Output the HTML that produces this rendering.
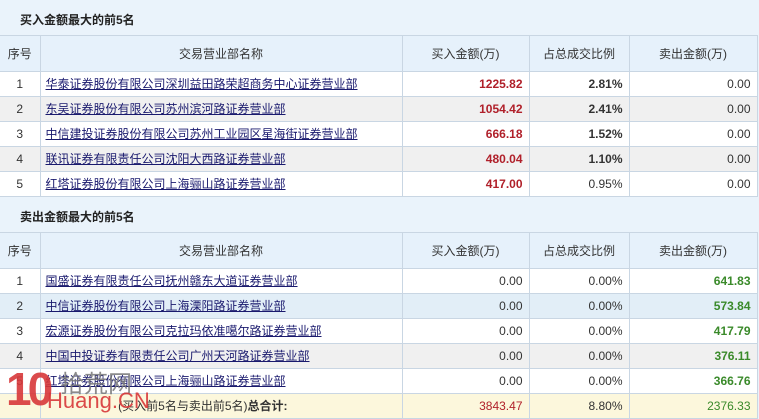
<!DOCTYPE html>
<html><head><meta charset="utf-8"><style>
*{margin:0;padding:0;box-sizing:border-box}
body{width:759px;height:418px;overflow:hidden;background:#eaf3fb;font-family:"Liberation Sans","Noto Sans CJK SC",sans-serif;font-size:12px;color:#333;position:relative}
.t{position:absolute;left:20px;font-weight:bold;font-size:12px;color:#222}
table{position:absolute;left:0;width:757px;border-collapse:collapse;table-layout:fixed}
td{border:1px solid #c9d6e3;height:25px;text-align:right;padding-right:6px;line-height:14px}
td:first-child{text-align:center;padding:0;border-left:none}
td:nth-child(2){text-align:left;padding-left:5px}
tr.h td{height:36px;text-align:center;padding:0;background:#e6f1fb;color:#333}
a{color:#1a1a6e;text-decoration:underline}
tr.w td{background:#fff}
tr.g td{background:#f0f0f0}
tr.b td{background:#e2eef7}
tr.y td{background:#fcf7dc}
.r{color:#b0202a;font-weight:bold}
.k{font-weight:bold;color:#333}
.gr{color:#3a8a2a;font-weight:bold}
</style></head><body>
<div class="t" style="top:11px">买入金额最大的前5名</div>
<table style="top:35px">
<colgroup><col style="width:40px"><col style="width:362px"><col style="width:127px"><col style="width:100px"><col style="width:128px"></colgroup>
<tr class="h"><td>序号</td><td style="text-align:center">交易营业部名称</td><td>买入金额(万)</td><td>占总成交比例</td><td>卖出金额(万)</td></tr>
<tr class="w"><td>1</td><td><a>华泰证券股份有限公司深圳益田路荣超商务中心证券营业部</a></td><td class="r">1225.82</td><td class="k">2.81%</td><td>0.00</td></tr>
<tr class="g"><td>2</td><td><a>东吴证券股份有限公司苏州滨河路证券营业部</a></td><td class="r">1054.42</td><td class="k">2.41%</td><td>0.00</td></tr>
<tr class="w"><td>3</td><td><a>中信建投证券股份有限公司苏州工业园区星海街证券营业部</a></td><td class="r">666.18</td><td class="k">1.52%</td><td>0.00</td></tr>
<tr class="g"><td>4</td><td><a>联讯证券有限责任公司沈阳大西路证券营业部</a></td><td class="r">480.04</td><td class="k">1.10%</td><td>0.00</td></tr>
<tr class="w"><td>5</td><td><a>红塔证券股份有限公司上海骊山路证券营业部</a></td><td class="r">417.00</td><td>0.95%</td><td>0.00</td></tr>
</table>
<div class="t" style="top:208px">卖出金额最大的前5名</div>
<table style="top:232px">
<colgroup><col style="width:40px"><col style="width:362px"><col style="width:127px"><col style="width:100px"><col style="width:128px"></colgroup>
<tr class="h"><td>序号</td><td style="text-align:center">交易营业部名称</td><td>买入金额(万)</td><td>占总成交比例</td><td>卖出金额(万)</td></tr>
<tr class="w"><td>1</td><td><a>国盛证券有限责任公司抚州赣东大道证券营业部</a></td><td>0.00</td><td>0.00%</td><td class="gr">641.83</td></tr>
<tr class="b"><td>2</td><td><a>中信证券股份有限公司上海溧阳路证券营业部</a></td><td>0.00</td><td>0.00%</td><td class="gr">573.84</td></tr>
<tr class="w"><td>3</td><td><a>宏源证券股份有限公司克拉玛依准噶尔路证券营业部</a></td><td>0.00</td><td>0.00%</td><td class="gr">417.79</td></tr>
<tr class="g"><td>4</td><td><a>中国中投证券有限责任公司广州天河路证券营业部</a></td><td>0.00</td><td>0.00%</td><td class="gr">376.11</td></tr>
<tr class="w"><td>5</td><td><a>红塔证券股份有限公司上海骊山路证券营业部</a></td><td>0.00</td><td>0.00%</td><td class="gr">366.76</td></tr>
<tr class="y"><td></td><td style="text-align:right;padding-right:114px">(买入前5名与卖出前5名)<b>总合计:</b></td><td class="r" style="font-weight:normal">3843.47</td><td>8.80%</td><td class="gr" style="font-weight:normal">2376.33</td></tr>
</table>
<div style="position:absolute;left:6px;top:362px;font:bold 46px 'Liberation Sans',sans-serif;color:#d8383a;letter-spacing:-4px;opacity:.9">10</div>
<div style="position:absolute;left:60px;top:364px;font-size:24px;color:#777;font-family:'Liberation Sans','Noto Sans CJK SC',sans-serif;opacity:.85">拾荒网</div>
<div style="position:absolute;left:47px;top:388px;font-size:22px;color:#d8383a;opacity:.9">Huang.CN</div>
</body></html>
